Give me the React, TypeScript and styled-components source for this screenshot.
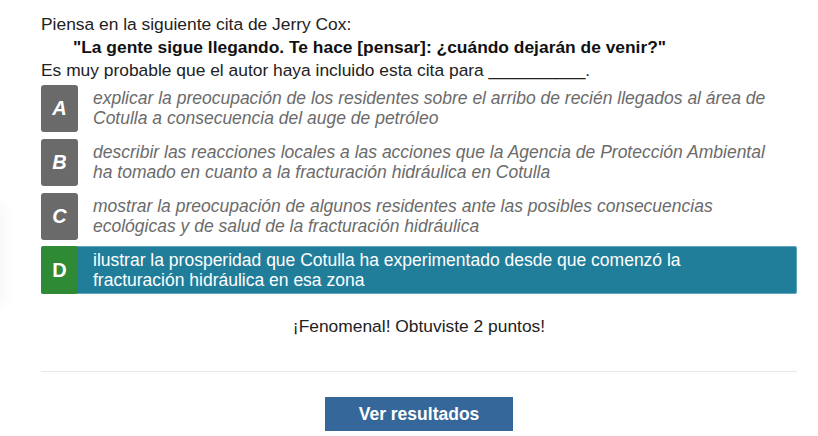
import React from "react";
import styled, { createGlobalStyle } from "styled-components";

const Global = createGlobalStyle`
  html, body { margin: 0; padding: 0; background: #fff; }
  body { font-family: "Liberation Sans", Arial, sans-serif; color: #222; }
`;

const Page = styled.div`
  position: relative;
  width: 818px;
  height: 436px;
  overflow: hidden;
  box-sizing: border-box;
  padding: 13px 21px 0 41px;
`;

const EdgeShadow = styled.div`
  position: absolute;
  left: -40px;
  top: 205px;
  width: 40px;
  height: 100px;
  box-shadow: 0 0 18px rgba(0, 0, 0, 0.06);
`;

const Prompt = styled.div`
  font-size: 17.4px;
  line-height: 23px;
  color: #222;
`;

const Quote = styled.div`
  font-weight: bold;
  padding-left: 32px;
  color: #111;
`;

const Options = styled.div`
  display: flex;
  flex-direction: column;
  gap: 6px;
  margin-top: 2px;
`;

const Option = styled.div<{ $selected?: boolean }>`
  display: flex;
  align-items: center;
  height: 48px;
  box-sizing: border-box;
  border-radius: 2px;
  background: ${(p) => (p.$selected ? "#217e9b" : "transparent")};
  border: 1px solid ${(p) => (p.$selected ? "#5fa6bd" : "transparent")};
  border-left: 0;
`;

const Letter = styled.div<{ $selected?: boolean }>`
  flex: none;
  width: 37px;
  height: ${(p) => (p.$selected ? "48px" : "47px")};
  margin-top: ${(p) => (p.$selected ? "-1px" : "0")};
  margin-bottom: ${(p) => (p.$selected ? "-1px" : "0")};
  border-radius: 3px;
  background: ${(p) => (p.$selected ? "#2f8a35" : "#6a6a6a")};
  color: #fff;
  display: flex;
  align-items: center;
  justify-content: center;
  font-weight: bold;
  font-size: 20px;
  font-style: ${(p) => (p.$selected ? "normal" : "italic")};
`;

const OptionText = styled.div<{ $selected?: boolean }>`
  margin-left: 15px;
  font-size: 17.5px;
  line-height: 20px;
  font-style: ${(p) => (p.$selected ? "normal" : "italic")};
  color: ${(p) => (p.$selected ? "#fff" : "#6b6b6b")};
  padding-right: 26px;
`;

const Feedback = styled.div`
  margin-top: 22px;
  text-align: center;
  font-size: 17.4px;
  line-height: 20px;
  color: #222;
`;

const Divider = styled.hr`
  margin: 35px 0 0 0;
  border: 0;
  border-top: 1px solid #e8e8e8;
`;

const ButtonRow = styled.div`
  display: flex;
  justify-content: center;
  margin-top: 25px;
`;

const Button = styled.button`
  width: 188px;
  height: 34px;
  border: 0;
  border-radius: 0;
  background: #35679b;
  color: #fff;
  font-family: "Liberation Sans", Arial, sans-serif;
  font-weight: bold;
  font-size: 17.5px;
  cursor: pointer;
`;

const options = [
  {
    l: "A",
    t: "explicar la preocupación de los residentes sobre el arribo de recién llegados al área de Cotulla a consecuencia del auge de petróleo",
  },
  {
    l: "B",
    t: "describir las reacciones locales a las acciones que la Agencia de Protección Ambiental ha tomado en cuanto a la fracturación hidráulica en Cotulla",
  },
  {
    l: "C",
    t: "mostrar la preocupación de algunos residentes ante las posibles consecuencias ecológicas y de salud de la fracturación hidráulica",
  },
  {
    l: "D",
    t: "ilustrar la prosperidad que Cotulla ha experimentado desde que comenzó la fracturación hidráulica en esa zona",
    s: true,
  },
];

export default function App() {
  return (
    <>
      <Global />
      <Page>
        <EdgeShadow />
        <Prompt>
          <div>Piensa en la siguiente cita de Jerry Cox:</div>
          <Quote>"La gente sigue llegando. Te hace [pensar]: ¿cuándo dejarán de venir?"</Quote>
          <div>Es muy probable que el autor haya incluido esta cita para __________.</div>
        </Prompt>
        <Options>
          {options.map((o) => (
            <Option key={o.l} $selected={o.s}>
              <Letter $selected={o.s}>{o.l}</Letter>
              <OptionText $selected={o.s}>{o.t}</OptionText>
            </Option>
          ))}
        </Options>
        <Feedback>¡Fenomenal! Obtuviste 2 puntos!</Feedback>
        <Divider />
        <ButtonRow>
          <Button>Ver resultados</Button>
        </ButtonRow>
      </Page>
    </>
  );
}
